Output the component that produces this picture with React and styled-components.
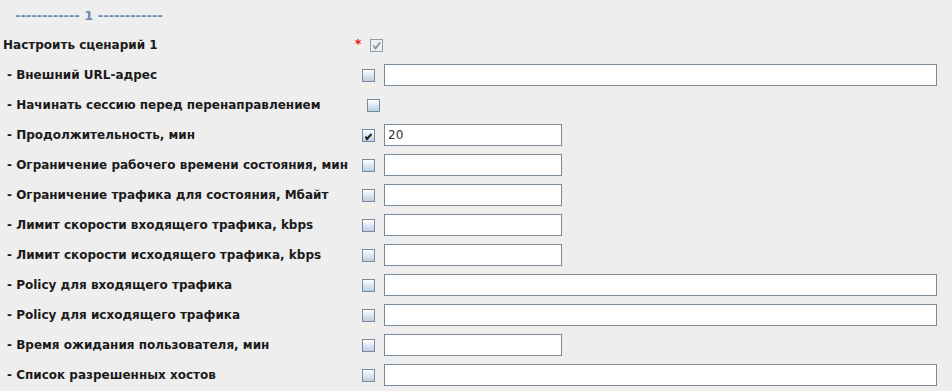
import React from "react";
import styled, { createGlobalStyle } from "styled-components";

const GlobalStyle = createGlobalStyle`
  html, body {
    margin: 0;
    padding: 0;
    background: #eeeeee;
  }
  body {
    font-family: "DejaVu Sans", "Liberation Sans", sans-serif;
  }
`;

const Page = styled.div`
  width: 952px;
  height: 391px;
  background: #eeeeee;
  overflow: hidden;
`;

const Heading = styled.div`
  padding: 8px 0 0 15px;
  height: 16px;
  line-height: 16px;
  font-size: 13px;
  font-weight: bold;
  color: #6d8ab0;
  white-space: pre;
`;

const Form = styled.div`
  display: grid;
  grid-template-columns: 352px 32px 553px;
  grid-auto-rows: 22px;
  row-gap: 8px;
  margin-top: 10px;
`;

const Label = styled.div`
  display: flex;
  align-items: center;
  padding-left: ${(p) => (p.$top ? "3px" : "7px")};
  font-size: 12px;
  font-weight: bold;
  color: #1a1a1a;
  white-space: nowrap;
`;

const CheckCell = styled.div`
  display: flex;
  align-items: center;
  padding-left: ${(p) => p.$pad}px;
`;

const Star = styled.span`
  color: #ee1111;
  font-size: 12px;
  font-weight: bold;
  margin-right: 9px;
  margin-top: -2px;
`;

const Box = styled.span`
  box-sizing: border-box;
  width: 13px;
  height: 13px;
  border: 1px solid ${(p) => (p.$disabled ? "#8f9caa" : "#7a8a99")};
  background: ${(p) =>
    p.$disabled
      ? "#eeeeee"
      : "linear-gradient(to bottom, #ffffff 0%, #e3ecf6 40%, #b8cfe5 100%)"};
  display: flex;
  align-items: center;
  justify-content: center;
`;

const InputCell = styled.div`
  display: flex;
  align-items: stretch;
`;

const Field = styled.div`
  box-sizing: border-box;
  width: ${(p) => (p.$short ? "178px" : "553px")};
  height: 22px;
  background: #ffffff;
  border: 1px solid #7a8a99;
  font-size: 12px;
  color: #333333;
  padding: 0 3px;
  line-height: 20px;
  font-family: "DejaVu Sans", sans-serif;
`;

const Check = ({ dim }) => (
  <svg width="11" height="11" viewBox="0 0 11 11">
    {dim ? (
      <path d="M2.5 5.5 L4.5 8.5 L9 2.5" fill="none" stroke="#8894a0" strokeWidth="1.8" />
    ) : (
      <path d="M2.5 6.5 L4 9 L8.5 4" fill="none" stroke="#222" strokeWidth="2" />
    )}
  </svg>
);

const rows = [
  { label: "- Внешний URL-адрес", field: "wide" },
  { label: "- Начинать сессию перед перенаправлением", pad: 15 },
  { label: "- Продолжительность, мин", field: "short", checked: true, value: "20" },
  { label: "- Ограничение рабочего времени состояния, мин", field: "short" },
  { label: "- Ограничение трафика для состояния, Мбайт", field: "short" },
  { label: "- Лимит скорости входящего трафика, kbps", field: "short" },
  { label: "- Лимит скорости исходящего трафика, kbps", field: "short" },
  { label: "- Policy для входящего трафика", field: "wide" },
  { label: "- Policy для исходящего трафика", field: "wide" },
  { label: "- Время ожидания пользователя, мин", field: "short" },
  { label: "- Список разрешенных хостов", field: "wide" },
];

export default function App() {
  return (
    <Page>
      <GlobalStyle />
      <Heading>------------ 1 ------------</Heading>
      <Form>
        <Label $top>Настроить сценарий 1</Label>
        <CheckCell $pad={3}>
          <Star>*</Star>
          <Box $disabled>
            <Check dim />
          </Box>
        </CheckCell>
        <InputCell />

        {rows.map((r) => (
          <React.Fragment key={r.label}>
            <Label>{r.label}</Label>
            <CheckCell $pad={r.pad ?? 10}>
              <Box>{r.checked && <Check />}</Box>
            </CheckCell>
            <InputCell>
              {r.field && <Field $short={r.field === "short"}>{r.value}</Field>}
            </InputCell>
          </React.Fragment>
        ))}
      </Form>
    </Page>
  );
}
